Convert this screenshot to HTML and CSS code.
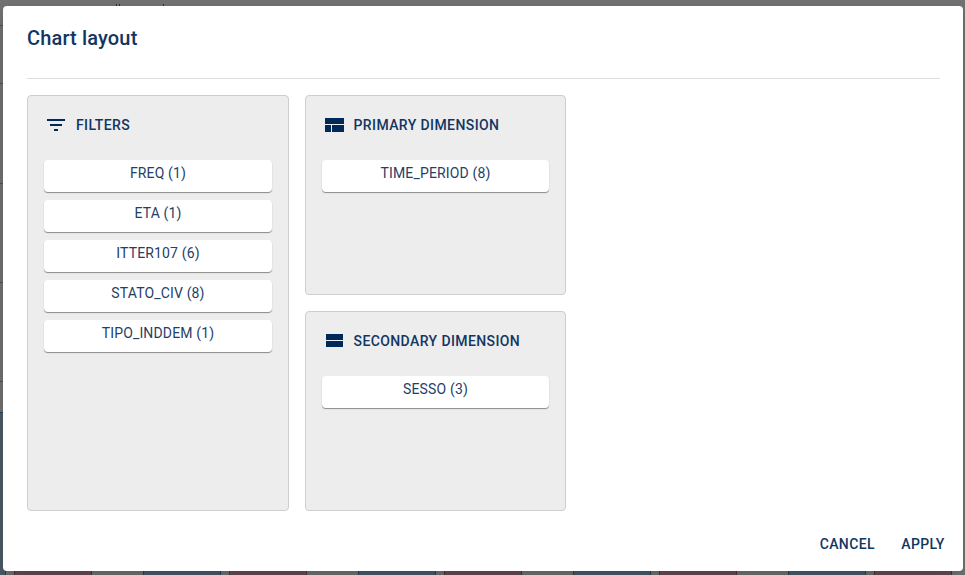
FILE: index.html
```html
<!DOCTYPE html>
<html lang="en">
<head>
<meta charset="utf-8">
<title>Chart layout</title>
<link rel="stylesheet" href="styles.css">
</head>
<body>
<svg class="backdrop" viewBox="0 0 965 575" aria-hidden="true">
  <path class="rule" d="M0 25.500h3M0 83.500h3M0 183.500h3M0 282.500h3M0 381.500h3"/>
  <path class="mark" d="M116 4h1v2h-1zM119 4h1v2h-1zM163 4h1v2h-1z"/>
  <g class="blue"><path d="M-2 412.500h7.500v170h-7.500zM143.500 500h77v90h-77zM358.500 500h77v90h-77zM573.500 500h77v90h-77zM788.500 500h77v90h-77z"/></g>
  <g class="red"><path d="M14.500 500h77v90h-77zM229.500 500h77v90h-77zM444.500 500h77v90h-77zM659.500 500h77v90h-77zM874.500 500h77v90h-77z"/></g>
</svg>
<main class="dialog" role="dialog" aria-labelledby="title">
  <header class="dialog-header"><h1 id="title">Chart layout</h1></header>
  <div class="panels">
    <section class="panel filters">
      <h2><svg viewBox="0 0 24 24"><path d="M10 18h4v-2h-4v2zM3 6v2h18V6H3zm3 7h12v-2H6v2z"/></svg>FILTERS</h2>
      <div class="items">
        <div class="item">FREQ (1)</div>
        <div class="item">ETA (1)</div>
        <div class="item">ITTER107 (6)</div>
        <div class="item">STATO_CIV (8)</div>
        <div class="item">TIPO_INDDEM (1)</div>
      </div>
    </section>
    <section class="panel">
      <h2><svg class="blocks" viewBox="0 0 24 24"><path d="M3 5h19v6H3zM3 12h6v7H3zM10 12h12v7H10z"/></svg>PRIMARY DIMENSION</h2>
      <div class="items"><div class="item">TIME_PERIOD (8)</div></div>
    </section>
    <section class="panel">
      <h2><svg class="blocks" viewBox="0 0 24 24"><path d="M4 5h17v6H4zM4 12h17v6H4z"/></svg>SECONDARY DIMENSION</h2>
      <div class="items"><div class="item">SESSO (3)</div></div>
    </section>
  </div>
  <footer class="actions"><button>CANCEL</button><button>APPLY</button></footer>
</main>
</body>
</html>
```
FILE: styles.css
```css
* { box-sizing: border-box; }
body {
  margin: 0;
  height: 575px;
  padding: 6px 2px 4px 3px;
  overflow: hidden;
  background: #727272;
  color: #123662;
  font-family: Roboto, "Liberation Sans", sans-serif;
}
.backdrop { position: absolute; inset: 0; width: 965px; height: 575px; }
.rule { stroke: #505050; }
.mark { fill: #333; }
.blue path { fill: #4c5b69; stroke: #263f54; }
.red path { fill: #6a4b54; stroke: #542b38; }
.dialog {
  position: relative;
  display: flex;
  flex-direction: column;
  height: 565px;
  border-radius: 4px;
  background: #fff;
  box-shadow: 0 8px 20px rgba(0, 0, 0, .18);
}
.dialog-header { height: 73px; margin: 0 23px 0 24px; padding-top: 16px; border-bottom: 1px solid #dedede; }
h1 { margin: 0; font-size: 20px; font-weight: 500; line-height: 32px; letter-spacing: .15px; }
.panels {
  display: grid;
  grid-template: 200px 200px / 262px 261px;
  gap: 16px;
  margin: 16px 24px 0;
}
.panel { padding: 16px; border: 1px solid #cecece; border-radius: 4px; background: #ededed; }
.filters { grid-row: span 2; }
h2 {
  display: flex;
  align-items: center;
  gap: 8px;
  height: 25px;
  margin: 0;
  font-size: 14px;
  font-weight: 500;
  letter-spacing: .4px;
}
h2 svg { width: 24px; height: 24px; fill: #00295a; }
.blocks { shape-rendering: crispEdges; }
.panel:not(.filters) h2 { gap: 7.5px; }
.items { display: grid; gap: 8px; margin-top: 23px; }
.item {
  height: 32px;
  border-radius: 4px;
  background: #fff;
  box-shadow: 0 1px 1px rgba(0, 0, 0, .42);
  color: #1f4069;
  font-size: 14px;
  line-height: 27px;
  letter-spacing: .15px;
  text-align: center;
}
.actions { display: flex; justify-content: flex-end; gap: 8px; margin-top: auto; padding: 8px 8px 9px; }
button {
  min-width: 64px;
  height: 36px;
  padding: 0 8px;
  border: 0;
  background: none;
  color: inherit;
  font: 500 14px Roboto, "Liberation Sans", sans-serif;
  letter-spacing: .4px;
}
```
